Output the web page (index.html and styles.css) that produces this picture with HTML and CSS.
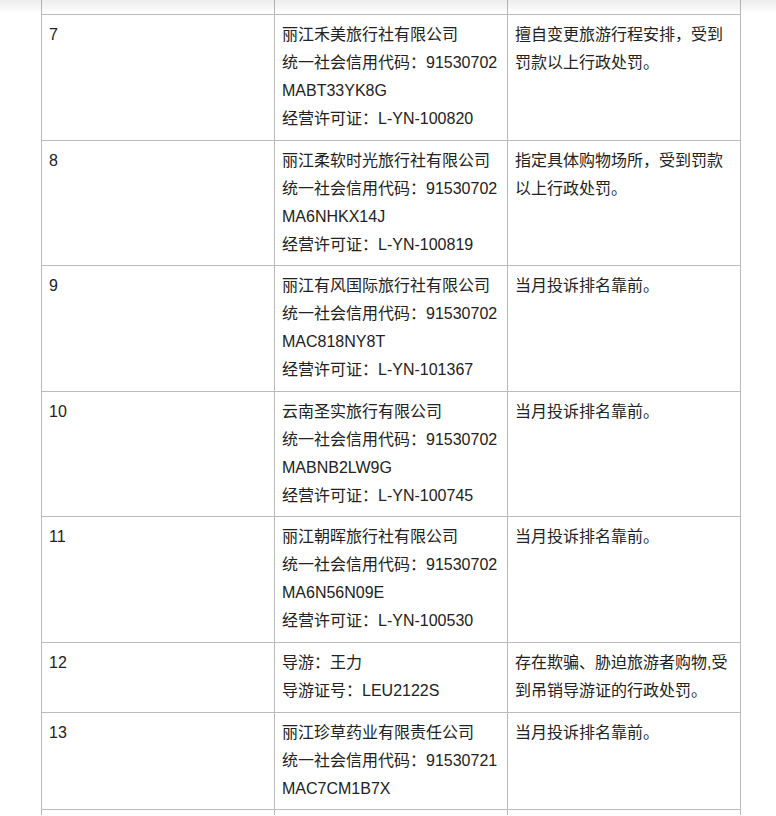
FILE: index.html
```html
<!DOCTYPE html>
<html lang="zh-CN">
<head>
<meta charset="utf-8">
<title>名单</title>
<link rel="stylesheet" href="styles.css">
</head>
<body>
<div class="top-shade"></div>
<div class="page">
<table class="list">
<colgroup><col class="c1"><col class="c2"><col class="c3"></colgroup>
<tbody>
<tr class="stub"><td></td><td></td><td></td></tr>
<tr>
<td>7</td>
<td>丽江禾美旅行社有限公司<br>统一社会信用代码：91530702<br>MABT33YK8G<br>经营许可证：L-YN-100820</td>
<td>擅自变更旅游行程安排，受到罚款以上行政处罚。</td>
</tr>
<tr>
<td>8</td>
<td>丽江柔软时光旅行社有限公司<br>统一社会信用代码：91530702<br>MA6NHKX14J<br>经营许可证：L-YN-100819</td>
<td>指定具体购物场所，受到罚款以上行政处罚。</td>
</tr>
<tr>
<td>9</td>
<td>丽江有风国际旅行社有限公司<br>统一社会信用代码：91530702<br>MAC818NY8T<br>经营许可证：L-YN-101367</td>
<td>当月投诉排名靠前。</td>
</tr>
<tr>
<td>10</td>
<td>云南圣实旅行有限公司<br>统一社会信用代码：91530702<br>MABNB2LW9G<br>经营许可证：L-YN-100745</td>
<td>当月投诉排名靠前。</td>
</tr>
<tr>
<td>11</td>
<td>丽江朝晖旅行社有限公司<br>统一社会信用代码：91530702<br>MA6N56N09E<br>经营许可证：L-YN-100530</td>
<td>当月投诉排名靠前。</td>
</tr>
<tr>
<td>12</td>
<td>导游：王力<br>导游证号：LEU2122S</td>
<td>存在欺骗、胁迫旅游者购物,受到吊销导游证的行政处罚。</td>
</tr>
<tr>
<td>13</td>
<td>丽江珍草药业有限责任公司<br>统一社会信用代码：91530721<br>MAC7CM1B7X</td>
<td>当月投诉排名靠前。</td>
</tr>
<tr class="tail"><td></td><td></td><td></td></tr>
</tbody>
</table>
</div>
</body>
</html>
```
FILE: styles.css
```css
html, body {
  margin: 0;
  padding: 0;
  background: #fff;
}
body {
  font-family: "Liberation Sans", "Noto Sans CJK SC", sans-serif;
  font-size: 16px;
  color: #222;
}
.top-shade {
  position: fixed;
  top: 0;
  left: 0;
  right: 0;
  height: 14px;
  background: linear-gradient(to bottom, rgba(0,0,0,0.07), rgba(0,0,0,0));
  pointer-events: none;
  z-index: 2;
}
.page {
  padding-left: 41px;
}
.list {
  border-collapse: collapse;
  table-layout: fixed;
  width: 700px;
}
.c1, .c2, .c3 {
  width: 233px;
}
.list td {
  border: 1px solid #bbb;
  padding: 6px 7px 6.6px;
  line-height: 28px;
  vertical-align: top;
  word-break: break-all;
}
.list .stub td {
  border-top: none;
  height: 14px;
  padding: 0;
}
.list .tail td {
  border-bottom: none;
  height: 5px;
  padding: 0;
}
```
